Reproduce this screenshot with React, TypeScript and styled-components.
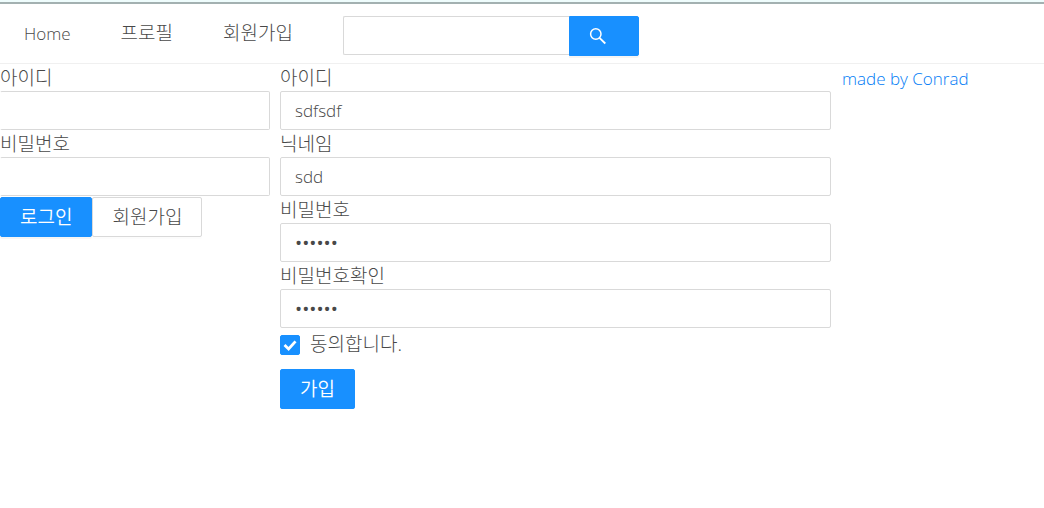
import React from "react";
import styled, { createGlobalStyle } from "styled-components";

const GlobalStyle = createGlobalStyle`
  *, *::before, *::after { box-sizing: border-box; }
  body {
    margin: 0;
    background: #fff;
    color: #484848;
    font-family: "Open Sans", "Noto Sans CJK KR", sans-serif;
    font-size: 19px;
    font-weight: 300;
    line-height: 27px;
  }
  button, input { font: inherit; color: inherit; }
`;

const Header = styled.header`
  border-top: 2px solid #effdfd;
  border-bottom: 1px solid #f0f0f0;
`;

const Nav = styled.nav`
  display: flex;
  align-items: center;
  gap: 50px;
  padding: 12px 24px 7px;
  border-top: 2px solid #a3b1b1;
`;

const NavLink = styled.a<{ $latin?: boolean }>`
  color: inherit;
  text-decoration: none;
  white-space: nowrap;
  padding-bottom: 6px;
  font-size: ${(p) => (p.$latin ? 17 : 19)}px;
`;

const SearchForm = styled.form`
  display: flex;
  align-items: flex-start;
`;

const TextInput = styled.input`
  display: block;
  width: 100%;
  height: 39px;
  padding: 0 14px;
  font-size: 17px;
  background: #fff;
  border: 1px solid #d9d9d9;
  border-radius: 2px;
  outline: none;

  &[type="password"] { font-size: 19px; font-weight: 400; }
`;

const SearchInput = styled(TextInput)`
  width: 226px;
  border-right: 0;
  border-radius: 2px 0 0 2px;
`;

const Button = styled.button<{ $primary?: boolean }>`
  height: 40px;
  padding: 0 19px;
  white-space: nowrap;
  border: 1px solid ${(p) => (p.$primary ? "#1890ff" : "#d9d9d9")};
  border-radius: 2px;
  background: ${(p) => (p.$primary ? "#1890ff" : "#fff")};
  color: ${(p) => (p.$primary ? "#fff" : "inherit")};
  font-weight: ${(p) => (p.$primary ? 350 : 300)};
  box-shadow: 0 2px 0 rgba(0, 0, 0, ${(p) => (p.$primary ? 0.04 : 0.01)});
  cursor: pointer;
`;

const SearchButton = styled(Button)`
  display: flex;
  align-items: center;
  width: 70px;
  border-radius: 0 2px 2px 0;
`;

const Columns = styled.div`
  display: grid;
  grid-template-columns: 270fr 551fr 203fr;
  gap: 10px;
`;

const LoginForm = styled.form`
  ${TextInput} { border-left-color: transparent; }
`;

const Label = styled.label`
  display: block;
  height: 27px;
  line-height: 29px;
`;

const ButtonRow = styled.div`
  display: flex;
  margin-top: 1px;
`;

const Agreement = styled.label`
  display: flex;
  align-items: center;
  gap: 10px;
  margin: 3px 0 11px;
`;

const CheckWrap = styled.span`
  display: grid;
  width: 20px;
  height: 20px;

  > * { grid-area: 1 / 1; }
  > svg { pointer-events: none; }
`;

const Checkbox = styled.input`
  appearance: none;
  width: 20px;
  height: 20px;
  margin: 0;
  border: 1px solid #d9d9d9;
  border-radius: 2px;

  &:checked {
    background: #1890ff;
    border-color: #1890ff;
  }
`;

const Credit = styled.a`
  justify-self: start;
  align-self: start;
  padding: 1px;
  color: #007bf5;
  font-size: 17px;
  text-decoration: none;
`;

type FieldProps = { id: string; label: string; type?: string; value?: string };

function Field({ id, label, type = "text", value }: FieldProps) {
  return (
    <div>
      <Label htmlFor={id}>{label}</Label>
      <TextInput id={id} type={type} defaultValue={value} />
    </div>
  );
}

export default function App() {
  return (
    <>
      <GlobalStyle />
      <Header>
        <Nav>
          <NavLink href="#home" $latin>Home</NavLink>
          <NavLink href="#profile">프로필</NavLink>
          <NavLink href="#signup">회원가입</NavLink>
          <SearchForm onSubmit={(e) => e.preventDefault()}>
            <SearchInput type="search" aria-label="검색" />
            <SearchButton $primary aria-label="검색">
              <svg width="18" height="18" viewBox="0 0 18 18" fill="none" stroke="#fff" strokeWidth="1.5">
                <circle cx="6.8" cy="7" r="5.2" />
                <path d="M10.5 10.8 16.3 16.5" strokeWidth="1.8" />
              </svg>
            </SearchButton>
          </SearchForm>
        </Nav>
      </Header>
      <Columns>
        <LoginForm onSubmit={(e) => e.preventDefault()}>
          <Field id="login-id" label="아이디" />
          <Field id="login-password" label="비밀번호" type="password" />
          <ButtonRow>
            <Button $primary>로그인</Button>
            <Button type="button">회원가입</Button>
          </ButtonRow>
        </LoginForm>
        <form onSubmit={(e) => e.preventDefault()}>
          <Field id="user-id" label="아이디" value="sdfsdf" />
          <Field id="user-nick" label="닉네임" value="sdd" />
          <Field id="user-password" label="비밀번호" type="password" value="sdfsdf" />
          <Field id="user-password-check" label="비밀번호확인" type="password" value="sdfsdf" />
          <Agreement>
            <CheckWrap>
              <Checkbox type="checkbox" defaultChecked />
              <svg width="20" height="20" viewBox="0 0 20 20" fill="none" stroke="#fff" strokeWidth="2.8">
                <path d="M4.5 10 8.6 14 15.5 6.4" />
              </svg>
            </CheckWrap>
            동의합니다.
          </Agreement>
          <Button $primary>가입</Button>
        </form>
        <Credit href="#conrad">made by Conrad</Credit>
      </Columns>
    </>
  );
}
